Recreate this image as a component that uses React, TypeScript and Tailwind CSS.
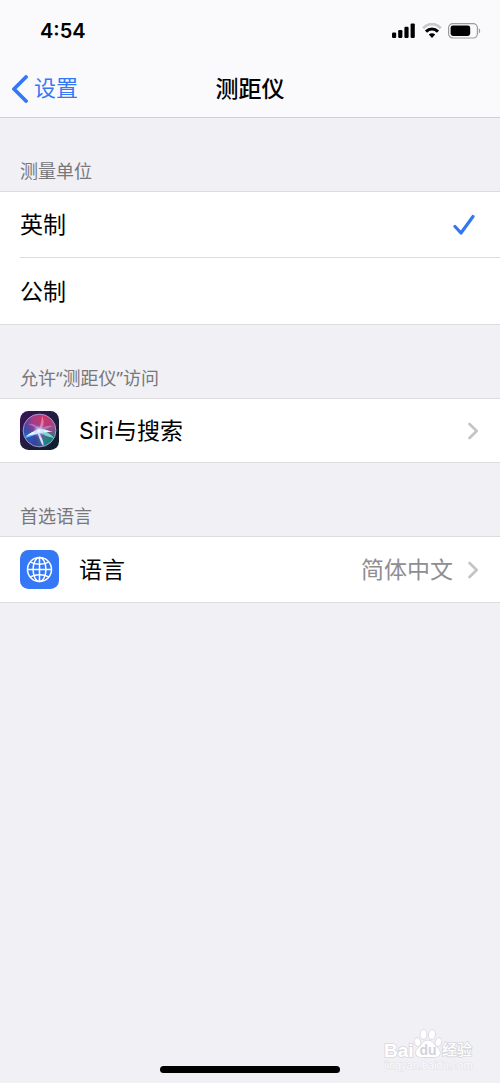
import React from "react";

const units = [
  { id: "imperial", label: "英制" },
  { id: "metric", label: "公制" },
];

const SignalIcon = () => (
  <svg width="24" height="16" viewBox="0 0 24 16" fill="#000" aria-hidden="true">
    <rect x="0" y="9.5" width="4.2" height="5.5" rx="1.2" />
    <rect x="6.2" y="7" width="4.2" height="8" rx="1.2" />
    <rect x="12.4" y="3.8" width="4.2" height="11.2" rx="1.2" />
    <rect x="18.6" y="0.4" width="4.2" height="14.6" rx="1.2" />
  </svg>
);

const WifiIcon = () => (
  <svg width="20" height="16" viewBox="0 0 20 16" fill="none" aria-hidden="true">
    <path d="M1.2 5.2C6.2 -0.2 13.8 -0.2 18.8 5.2" stroke="#c9c9cb" strokeWidth="2.8" />
    <path d="M4 8.6C7.4 5.1 12.6 5.1 16 8.6" stroke="#000" strokeWidth="3" />
    <path d="M6.8 11.4C8.6 9.8 11.4 9.8 13.2 11.4L10 15Z" fill="#000" />
  </svg>
);

const BatteryIcon = () => (
  <svg width="33" height="16" viewBox="0 0 33 16" fill="none" aria-hidden="true">
    <rect x="0.6" y="0.6" width="28.8" height="14.4" rx="4.2" stroke="#9b9b9d" strokeWidth="1.2" />
    <rect x="2.6" y="2.6" width="19.6" height="10.4" rx="2.4" fill="#000" />
    <path d="M30.8 5.2C32.6 6 32.6 9.6 30.8 10.4Z" fill="#9b9b9d" />
  </svg>
);

const CheckIcon = () => (
  <svg
    width="22"
    height="22"
    viewBox="0 0 22 22"
    fill="none"
    aria-hidden="true"
    className="invisible peer-checked:visible"
  >
    <path
      d="M2 12.5L8 19L20 2.5"
      stroke="#3478f0"
      strokeWidth="3.2"
      strokeLinecap="round"
      strokeLinejoin="round"
    />
  </svg>
);

const ChevronIcon = () => (
  <svg width="12" height="18" viewBox="0 0 12 18" fill="none" aria-hidden="true">
    <path d="M1.5 2L8.7 9L1.5 16" stroke="#c4c4c7" strokeWidth="2.6" strokeLinecap="round" strokeLinejoin="round" />
  </svg>
);

const SiriIcon = () => (
  <svg width="39" height="39" viewBox="0 0 39 39" aria-hidden="true">
    <defs>
      <linearGradient id="siri-bg" x1="0" y1="0" x2="1" y2="1">
        <stop offset="0" stopColor="#3a1157" />
        <stop offset="0.5" stopColor="#231d3f" />
        <stop offset="1" stopColor="#0d1c2b" />
      </linearGradient>
      <radialGradient id="siri-pink" cx="0.65" cy="0.12" r="0.7">
        <stop offset="0" stopColor="#cf3560" />
        <stop offset="0.55" stopColor="#b23f86" stopOpacity="0.85" />
        <stop offset="1" stopColor="#9a3d8b" stopOpacity="0" />
      </radialGradient>
      <radialGradient id="siri-blue" cx="0.1" cy="0.65" r="0.6">
        <stop offset="0" stopColor="#2560c4" />
        <stop offset="1" stopColor="#2a55b8" stopOpacity="0" />
      </radialGradient>
      <radialGradient id="siri-teal" cx="0.95" cy="0.75" r="0.6">
        <stop offset="0" stopColor="#12805f" />
        <stop offset="0.6" stopColor="#1a8f98" stopOpacity="0.85" />
        <stop offset="1" stopColor="#177f8c" stopOpacity="0" />
      </radialGradient>
      <radialGradient id="siri-glow">
        <stop offset="0" stopColor="#fff" />
        <stop offset="0.35" stopColor="#cbe6ff" stopOpacity="0.8" />
        <stop offset="1" stopColor="#7db4ff" stopOpacity="0" />
      </radialGradient>
    </defs>
    <rect width="39" height="39" rx="8.5" fill="url(#siri-bg)" />
    <circle cx="19.5" cy="19.5" r="16.4" fill="#45318a" />
    <circle cx="19.5" cy="19.5" r="16.4" fill="url(#siri-blue)" />
    <circle cx="19.5" cy="19.5" r="16.4" fill="url(#siri-teal)" />
    <circle cx="19.5" cy="19.5" r="16.4" fill="url(#siri-pink)" />
    <circle cx="19.5" cy="19.5" r="16.4" fill="none" stroke="#a9a3cf" strokeWidth="0.9" />
    <path d="M18 19C15 16 11 14 8 13C12 12 17 14 20 18Z" fill="#b58af0" opacity="0.6" />
    <path d="M19 19C20 14 22 10 22 5C24.5 10 24 15 21 19Z" fill="#f0a0d4" opacity="0.65" />
    <path d="M20 18C24 15 29 14 33 15C29 17 25 18 21 21Z" fill="#c8a5ec" opacity="0.5" />
    <path d="M20 19C26 20 31 23 34 27C28 26 23 24 19 21Z" fill="#72f0df" opacity="0.85" />
    <path d="M18 20C21 25 24 30 23.5 35C20 31 19 25 17 21Z" fill="#f3d6ff" />
    <path d="M20 20C15 20 9 22 5 27C10 26 15 24 21 21Z" fill="#62c4ff" />
    <path d="M5 25.5C11 22 16 18 20 18C25 18 28 20 33 20.5C25 21.5 18 22 5 25.5Z" fill="#e9f7ff" />
    <circle cx="19" cy="20" r="6" fill="url(#siri-glow)" />
  </svg>
);

const GlobeIcon = () => (
  <svg width="39" height="39" viewBox="0 0 39 39" fill="none" aria-hidden="true">
    <rect width="39" height="39" rx="8.5" fill="#3478f6" />
    <g stroke="#fff" strokeWidth="1.5">
      <circle cx="19.5" cy="19.5" r="12" />
      <ellipse cx="19.5" cy="19.5" rx="6.4" ry="12" />
      <path d="M19.5 7.5V31.5M7.5 19.5H31.5" />
      <path d="M10.4 12.2C15 14.8 24 14.8 28.6 12.2M10.4 26.8C15 24.2 24 24.2 28.6 26.8" />
    </g>
  </svg>
);

const Watermark = () => (
  <div className="pointer-events-none absolute right-6 bottom-2.5">
    <svg width="92" height="46" viewBox="0 0 92 46" aria-hidden="true">
      <g fill="#fff" stroke="#d6d6dd" strokeWidth="1.6" paintOrder="stroke">
        <ellipse cx="33.5" cy="15" rx="2.8" ry="4" transform="rotate(-20 33.5 15)" />
        <ellipse cx="39.5" cy="7.5" rx="3" ry="4.4" />
        <ellipse cx="48" cy="7.5" rx="3" ry="4.4" transform="rotate(10 48 7.5)" />
        <ellipse cx="54.5" cy="15" rx="2.8" ry="4" transform="rotate(20 54.5 15)" />
        <path d="M44 13.5C48 13.5 50 17 52 19.5C55 22 57 24.5 55.5 28C54 31 49 30 44 30C39 30 34.5 31 32.5 28C31 24.5 33 22 36 19.5C38 17 40 13.5 44 13.5Z" />
        <text x="0" y="30" fontSize="19" fontWeight="700" fontFamily="'Liberation Sans', sans-serif">
          Bai
        </text>
        <text x="58" y="28" fontSize="15" fontWeight="500" fontFamily="'Noto Sans CJK SC', sans-serif">
          经验
        </text>
      </g>
      <text
        x="44"
        y="28"
        textAnchor="middle"
        fontSize="14"
        fontWeight="700"
        fontFamily="'Liberation Sans', sans-serif"
        fill="#d2d2d9"
      >
        du
      </text>
      <text
        x="0"
        y="42"
        fontSize="11"
        fontFamily="'Liberation Sans', sans-serif"
        fill="#fbfbfd"
        stroke="#e2e2e8"
        strokeWidth="1"
        paintOrder="stroke"
      >
        jingyan.baidu.com
      </text>
    </svg>
  </div>
);

const Section = ({ title, children }: { title: string; children: React.ReactNode }) => (
  <section>
    <h2 className="px-5 pt-[41px] pb-2 font-['Noto_Sans','Noto_Sans_CJK_SC',sans-serif] text-[18px] leading-6 text-[#77777c]">
      {title}
    </h2>
    <div className="border-y border-[#dcdce0] bg-white">{children}</div>
  </section>
);

const App = () => {
  const [unit, setUnit] = React.useState("imperial");

  return (
    <div className="relative flex min-h-screen flex-col bg-[#f0f0f5] font-[Inter,'Noto_Sans_CJK_SC',sans-serif] text-[23px] text-black">
      <header className="border-b border-[#cfcfd3] bg-[#fafafc]">
        <div className="flex h-15 items-center justify-between pt-0.5 pr-[19px] pl-10">
          <span className="text-[20px] font-semibold">4:54</span>
          <div className="flex items-center gap-[6px]">
            <SignalIcon />
            <WifiIcon />
            <BatteryIcon />
          </div>
        </div>
        <nav className="grid h-[57px] grid-cols-[1fr_auto_1fr] items-center px-[11px]">
          <a href="#settings" className="flex items-center gap-[6px] text-[22px] text-[#3478f6]">
            <svg width="17" height="28" viewBox="0 0 17 28" fill="none" aria-hidden="true">
              <path
                d="M15 2L3 14L15 26"
                stroke="currentColor"
                strokeWidth="3.8"
                strokeLinecap="round"
                strokeLinejoin="round"
              />
            </svg>
            <span>设置</span>
          </a>
          <h1 className="pt-0.5 font-medium">测距仪</h1>
        </nav>
      </header>

      <main>
        <Section title="测量单位">
          <div role="radiogroup" aria-label="测量单位" className="pl-5">
            {units.map((item) => (
              <label
                key={item.id}
                className="flex h-[66px] items-center justify-between border-b border-[#dcdce0] pr-[25px] last:border-b-0"
              >
                <span className="pt-0.5">{item.label}</span>
                <input
                  type="radio"
                  name="unit"
                  value={item.id}
                  checked={unit === item.id}
                  onChange={() => setUnit(item.id)}
                  className="peer sr-only"
                />
                <CheckIcon />
              </label>
            ))}
          </div>
        </Section>

        <Section title="允许“测距仪”访问">
          <a href="#siri" className="flex h-[63px] items-center px-5">
            <SiriIcon />
            <span className="ml-5 flex-1 pt-0.5">Siri与搜索</span>
            <ChevronIcon />
          </a>
        </Section>

        <Section title="首选语言">
          <a href="#language" className="flex h-[65px] items-center px-5">
            <GlobeIcon />
            <span className="ml-5 flex-1 pt-0.5">语言</span>
            <span className="mr-[15px] pt-0.5 text-[#8e8e92]">简体中文</span>
            <ChevronIcon />
          </a>
        </Section>
      </main>

      <footer className="mt-auto flex justify-center pb-[10px]">
        <div className="h-[7px] w-[36%] rounded-full bg-black" />
      </footer>
      <Watermark />
    </div>
  );
};

export default App;
